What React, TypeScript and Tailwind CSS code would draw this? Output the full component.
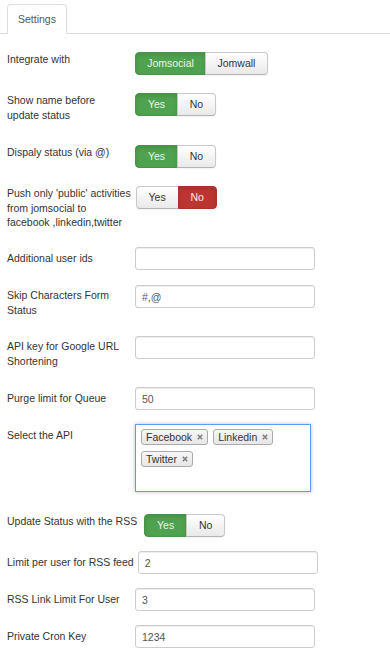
import React from "react";

type Opt = { label: string; on: boolean; tone?: "green" | "red"; w: string };

function Toggle({ options }: { options: Opt[] }) {
    return (
        <div className="inline-flex">
            {options.map((o, i) => {
                const first = i === 0;
                const last = i === options.length - 1;
                let tone =
                    "bg-linear-to-b from-white to-[#e9e9e9] border-[#c8c8c8] border-b-[#b3b3b3] text-[#333] shadow-[0_1px_2px_rgba(0,0,0,0.05)]";
                if (o.on && o.tone === "green")
                    tone = "bg-[#4fa24f] border-[#479347] text-[#e9f5e9] shadow-[inset_0_2px_4px_rgba(0,0,0,0.12)]";
                if (o.on && o.tone === "red")
                    tone = "bg-[#bb3631] border-[#ad302b] text-[#fbeaea] shadow-[inset_0_2px_4px_rgba(0,0,0,0.12)]";
                return (
                    <div
                        key={o.label}
                        className={`h-[23px] border flex items-center justify-center ${o.w} ${tone} ${first ? "rounded-l-[4px]" : "-ml-px"} ${last ? "rounded-r-[4px]" : ""}`}
                    >
                        {o.label}
                    </div>
                );
            })}
        </div>
    );
}

function Field({ value = "", w = "w-[180px]" }: { value?: string; w?: string }) {
    return (
        <input
            readOnly
            value={value}
            className={`${w} h-[23px] border border-[#ccc] rounded-[3px] bg-white pl-[6px] text-[#555] outline-none shadow-[inset_0_1px_1px_rgba(0,0,0,0.075)]`}
        />
    );
}

function Tag({ label }: { label: string }) {
    return (
        <div className="h-[16px] border border-[#aaa] rounded-[3px] bg-linear-to-b from-[#f6f6f6] to-[#e7e7e7] pl-[4px] pr-[4px] flex items-center gap-[5px] text-[#333] leading-none">
            {label}
            <svg width="6" height="6" viewBox="0 0 6 6">
                <path d="M0.8 0.8 L5.2 5.2 M5.2 0.8 L0.8 5.2" stroke="#808080" strokeWidth="1.6" />
            </svg>
        </div>
    );
}

function Row({
    h,
    label,
    pt,
    mr = "mr-[5px]",
    children,
}: {
    h: string;
    label: React.ReactNode;
    pt: string;
    mr?: string;
    children: React.ReactNode;
}) {
    return (
        <div className={`flex items-start ${h}`}>
            <div className={`min-w-[123px] whitespace-nowrap leading-[14.5px] ${mr} ${pt}`}>{label}</div>
            {children}
        </div>
    );
}

const yes = (on: boolean): Opt[] =>
    on
        ? [
              { label: "Yes", on: true, tone: "green", w: "w-[43px]" },
              { label: "No", on: false, w: "w-[39px]" },
          ]
        : [
              { label: "Yes", on: false, w: "w-[43px]" },
              { label: "No", on: true, tone: "red", w: "w-[39px]" },
          ];

export default function App() {
    return (
        <div className="w-[390px] h-[655px] overflow-hidden bg-white text-[#333] text-[10.5px] font-['Liberation_Sans',Arial,sans-serif]">
            {/* Tabs */}
            <div className="mt-[4px] h-[30px] flex border-b border-[#ddd]">
                <div className="ml-[7px] h-[30px] -mb-px px-[10px] flex items-center border border-b-0 border-[#ddd] rounded-t-[4px] bg-white text-[#555]">
                    Settings
                </div>
            </div>

            {/* Form */}
            <div className="pt-[18px] pl-[7px]">
                <Row h="h-[41px]" pt="pt-0" label="Integrate with">
                    <Toggle
                        options={[
                            { label: "Jomsocial", on: true, tone: "green", w: "w-[71px]" },
                            { label: "Jomwall", on: false, w: "w-[63px]" },
                        ]}
                    />
                </Row>
                <Row h="h-[52px]" pt="pt-0" label={<>Show name before<br />update status</>}>
                    <Toggle options={yes(true)} />
                </Row>
                <Row h="h-[41px]" pt="pt-0" label="Dispaly status (via @)">
                    <Toggle options={yes(true)} />
                </Row>
                <Row
                    h="h-[61px]"
                    pt="pt-0"
                    label={<>Push only 'public' activities<br />from jomsocial to<br />facebook ,linkedin,twitter</>}
                >
                    <Toggle options={yes(false)} />
                </Row>
                <Row h="h-[38px]" pt="pt-[4px]" label="Additional user ids">
                    <Field />
                </Row>
                <Row h="h-[51px]" pt="pt-[3px]" label={<>Skip Characters Form<br />Status</>}>
                    <Field value="#,@" />
                </Row>
                <Row h="h-[51px]" pt="pt-[3px]" label={<>API key for Google URL<br />Shortening</>}>
                    <Field />
                </Row>
                <Row h="h-[37px]" pt="pt-[4px]" label="Purge limit for Queue">
                    <Field value="50" />
                </Row>
                <Row h="h-[90px]" pt="pt-[4px]" label="Select the API">
                    <div className="w-[176px] h-[68px] bg-white border border-[#5d9cf5] shadow-[0_0_4px_rgba(0,0,0,0.25)] pl-[5px] pt-[4px] flex flex-wrap content-start gap-x-[5px] gap-y-[6px]">
                        <Tag label="Facebook" />
                        <Tag label="Linkedin" />
                        <Tag label="Twitter" />
                    </div>
                </Row>
                <Row h="h-[37px]" pt="pt-0" mr="mr-[7px]" label="Update Status with the RSS">
                    <Toggle options={yes(true)} />
                </Row>
                <Row h="h-[37px]" pt="pt-[4px]" mr="mr-[4px]" label="Limit per user for RSS feed">
                    <Field value="2" />
                </Row>
                <Row h="h-[37px]" pt="pt-[4px]" label="RSS Link Limit For User">
                    <Field value="3" />
                </Row>
                <Row h="h-[30px]" pt="pt-[4px]" label="Private Cron Key">
                    <Field value="1234" />
                </Row>
            </div>
        </div>
    );
}
